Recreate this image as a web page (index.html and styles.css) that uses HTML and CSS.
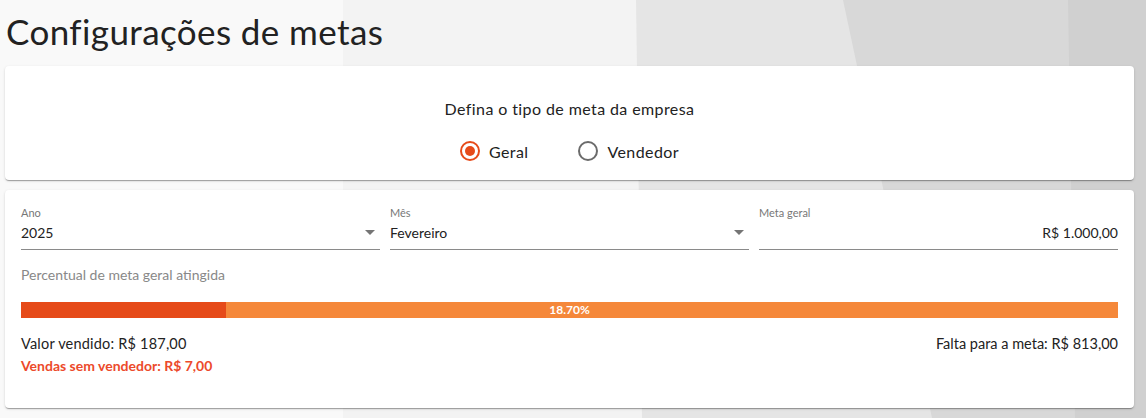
FILE: index.html
```html
<!DOCTYPE html>
<html lang="pt-BR">
<head>
<meta charset="utf-8">
<title>Configurações de metas</title>
<link rel="stylesheet" href="styles.css">
</head>
<body>
<svg class="bg" width="1146" height="418" viewBox="0 0 1146 418" preserveAspectRatio="none" aria-hidden="true">
  <rect x="0" y="0" width="1146" height="418" fill="#f9f9f9"/>
  <polygon points="343,0 1146,0 1146,418 343,418" fill="#f3f3f3"/>
  <polygon points="636,0 1146,0 1146,418 642,418" fill="#e5e5e5"/>
  <polygon points="843,0 1146,0 1146,418 932,418" fill="#d8d8d8"/>
  <polygon points="1068,0 1146,0 1146,418 1075,418" fill="#d0d0d0"/>
</svg>
<main class="page">
  <h1 class="title">Configurações de metas</h1>
  <section class="card type-card">
    <p class="question">Defina o tipo de meta da empresa</p>
    <div class="radios">
      <label class="radio checked">
        <svg class="radio-icon" viewBox="0 0 24 24" width="24" height="24"><circle cx="12" cy="12" r="9" fill="none" stroke="#e64a19" stroke-width="2"/><circle cx="12" cy="12" r="5" fill="#e64a19"/></svg>
        <span>Geral</span>
      </label>
      <label class="radio">
        <svg class="radio-icon" viewBox="0 0 24 24" width="24" height="24"><circle cx="12" cy="12" r="9" fill="none" stroke="#6b6b6b" stroke-width="2"/></svg>
        <span>Vendedor</span>
      </label>
    </div>
  </section>
  <section class="card goal-card">
    <div class="fields">
      <div class="field">
        <span class="field-label">Ano</span>
        <div class="field-input">
          <span>2025</span>
          <svg class="caret" viewBox="0 0 10 5" width="10" height="5"><polygon points="0,0 10,0 5,5" fill="#757575"/></svg>
        </div>
      </div>
      <div class="field">
        <span class="field-label">Mês</span>
        <div class="field-input">
          <span>Fevereiro</span>
          <svg class="caret" viewBox="0 0 10 5" width="10" height="5"><polygon points="0,0 10,0 5,5" fill="#757575"/></svg>
        </div>
      </div>
      <div class="field">
        <span class="field-label">Meta geral</span>
        <div class="field-input right">
          <span>R$ 1.000,00</span>
        </div>
      </div>
    </div>
    <p class="progress-title">Percentual de meta geral atingida</p>
    <div class="progress">
      <div class="progress-fill" style="width: 18.7%"></div>
      <span class="progress-label">18.70%</span>
    </div>
    <div class="summary">
      <div class="summary-left">
        <p class="sold">Valor vendido: R$ 187,00</p>
        <p class="no-seller">Vendas sem vendedor: R$ 7,00</p>
      </div>
      <p class="remaining">Falta para a meta: R$ 813,00</p>
    </div>
  </section>
</main>
</body>
</html>
```

FILE: styles.css
```css
* { box-sizing: border-box; }

html, body {
  margin: 0;
  padding: 0;
  width: 1146px;
  height: 418px;
  overflow: hidden;
}

body {
  font-family: "Lato", "Noto Sans", sans-serif;
  color: #222;
  position: relative;
}

.bg {
  position: absolute;
  left: 0;
  top: 0;
  z-index: 0;
}

.page {
  position: relative;
  z-index: 1;
  padding: 10px 12px 0 5px;
  display: flex;
  flex-direction: column;
}

.title {
  margin: 0 0 0 1px;
  font-weight: 400;
  font-size: 35px;
  line-height: 42px;
  height: 56px;
  color: #222;
  letter-spacing: 0.4px;
}

.card {
  background: #fff;
  border-radius: 4px;
  box-shadow: 0 2px 1px -1px rgba(0,0,0,0.2), 0 1px 1px 0 rgba(0,0,0,0.14), 0 1px 3px 0 rgba(0,0,0,0.12);
}

.type-card {
  height: 114px;
  display: flex;
  flex-direction: column;
  align-items: center;
  padding-top: 33px;
}

.question {
  margin: 0;
  font-size: 16px;
  line-height: 20px;
  letter-spacing: 0.4px;
  color: #222;
}

.radios {
  display: flex;
  gap: 48px;
  margin-top: 20px;
  margin-left: -2px;
}

.radio {
  display: flex;
  align-items: center;
  gap: 7px;
  font-size: 16px;
  letter-spacing: 0.4px;
  color: #222;
}

.goal-card {
  margin-top: 10px;
  height: 218px;
  padding: 16px 16px 0 16px;
}

.fields {
  display: grid;
  grid-template-columns: repeat(3, 1fr);
  gap: 10px;
}

.field {
  display: flex;
  flex-direction: column;
}

.field-label {
  font-size: 11px;
  line-height: 14px;
  color: #777;
}

.field-input {
  display: flex;
  justify-content: space-between;
  align-items: center;
  height: 30px;
  padding-bottom: 4px;
  font-size: 14px;
  color: #222;
  border-bottom: 1px solid #8a8a8a;
  padding-right: 5px;
}

.field-input.right {
  justify-content: flex-end;
  padding-right: 0;
}

.progress-title {
  margin: 16px 0 0 0;
  font-size: 14px;
  line-height: 18px;
  color: #888;
}

.progress {
  position: relative;
  margin-top: 18px;
  height: 16px;
  background: #f5883a;
}

.progress-fill {
  height: 100%;
  background: #e64a19;
}

.progress-label {
  position: absolute;
  left: 0;
  right: 0;
  top: 0;
  text-align: center;
  font-size: 12px;
  line-height: 16px;
  font-weight: 700;
  color: #fff;
}

.summary {
  display: flex;
  justify-content: space-between;
  margin-top: 15px;
}

.summary p {
  margin: 0;
  font-size: 14.5px;
  line-height: 22px;
}

.sold {
  letter-spacing: 0.2px;
}

.no-seller {
  color: #ec4a2b;
  font-weight: 700;
  font-size: 14px !important;
}
```
